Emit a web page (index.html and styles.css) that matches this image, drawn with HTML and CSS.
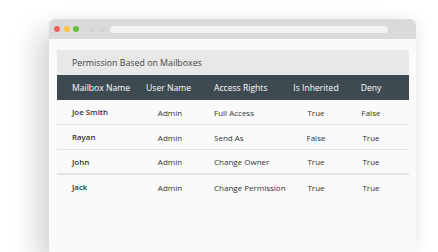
FILE: index.html
```html
<!DOCTYPE html>
<html lang="en">
<head>
    <meta charset="UTF-8">
    <meta name="viewport" content="width=device-width, initial-scale=1.0">
    <title>Permission Based on Mailboxes</title>
    <link rel="stylesheet" href="styles.css">
</head>
<body>
    <div class="browser">
        <div class="toolbar">
            <span class="dot red"></span>
            <span class="dot yellow"></span>
            <span class="dot green"></span>
            <span class="nav">&lsaquo;</span>
            <span class="nav">&rsaquo;</span>
            <div class="address"></div>
        </div>
        <div class="page">
            <div class="panel">
                <div class="panel-title">Permission Based on Mailboxes</div>
                <div class="row head">
                    <span>Mailbox Name</span>
                    <span class="center">User Name</span>
                    <span class="rights">Access Rights</span>
                    <span class="center">Is Inherited</span>
                    <span class="center">Deny</span>
                </div>
                <div class="row">
                    <span class="name">Joe Smith</span>
                    <span class="center user">Admin</span>
                    <span class="rights">Full Access</span>
                    <span class="center">True</span>
                    <span class="center">False</span>
                </div>
                <div class="row">
                    <span class="name">Rayan</span>
                    <span class="center user">Admin</span>
                    <span class="rights">Send As</span>
                    <span class="center">False</span>
                    <span class="center">True</span>
                </div>
                <div class="row thick">
                    <span class="name">John</span>
                    <span class="center user">Admin</span>
                    <span class="rights">Change Owner</span>
                    <span class="center">True</span>
                    <span class="center">True</span>
                </div>
                <div class="row last">
                    <span class="name">Jack</span>
                    <span class="center user">Admin</span>
                    <span class="rights">Change Permission</span>
                    <span class="center">True</span>
                    <span class="center">True</span>
                </div>
            </div>
        </div>
    </div>
</body>
</html>
```

FILE: styles.css
```css
html, body {
    height: 252px;
}
body {
    margin: 0;
    background-color: #ffffff;
    font-family: "Open Sans", Arial, sans-serif;
    overflow: hidden;
}
.browser {
    width: 367px;
    height: 233px;
    margin: 19px 0 0 49px;
    border-radius: 6px 6px 0 0;
    background-color: #fafafa;
    box-shadow: -14px 12px 26px rgba(0,0,0,0.15), 4px -2px 14px rgba(0,0,0,0.05);
}
.toolbar {
    display: flex;
    align-items: center;
    height: 20px;
    padding: 0 0 0 5px;
    background-color: #dadada;
    border-radius: 6px 6px 0 0;
}
.dot {
    width: 6px;
    height: 6px;
    border-radius: 50%;
    margin-right: 3.5px;
}
.red { background-color: #f25f5c; }
.yellow { background-color: #f7c443; }
.green { background-color: #65c040; }
.nav {
    color: #c4c4c4;
    font-size: 9px;
    line-height: 1;
    margin-left: 8px;
    margin-top: -1px;
}
.address {
    width: 278px;
    height: 7px;
    margin-left: 6px;
    border-radius: 4px;
    background-color: #f2f2f2;
}
.page {
    padding: 11px 7px 0 8px;
}
.panel-title {
    height: 25px;
    line-height: 26px;
    padding-left: 15px;
    background-color: #e8e8e8;
    color: #444444;
    font-size: 8.8px;
}
.row {
    display: grid;
    grid-template-columns: 80px 60px 93px 52px 58px 1fr;
    align-items: center;
    height: 24px;
    font-size: 8px;
    color: #333333;
    border-bottom: 1px solid #e4e4e4;
}
.row span:first-child {
    padding-left: 15px;
}
.head {
    height: 25px;
    border-bottom: none;
    background-color: #3e4a52;
    color: #ffffff;
    font-size: 8.6px;
}
.head .center:nth-child(2) {
    padding-left: 3px;
}
.thick {
    border-bottom: 2px solid #e2e2e2;
    height: 23px;
}
.last {
    border-bottom: none;
}
.center {
    text-align: center;
}
.user {
    padding-left: 6px;
}
.rights {
    padding-left: 17px;
}
.name {
    font-size: 7.9px;
    font-weight: 600;
    color: #333333;
}
```
